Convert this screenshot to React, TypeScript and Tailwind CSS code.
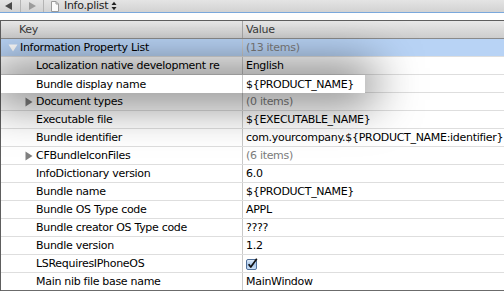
import React from "react";

type Row = {
  key: string;
  value?: string;
  level: number;
  disclosure?: "open" | "closed";
  gray?: boolean;
  check?: boolean;
  selected?: boolean;
  spot?: boolean;
};

const rows: Row[] = [
  { key: "Information Property List", value: "(13 items)", level: 0, disclosure: "open", gray: true, selected: true },
  { key: "Localization native development re", value: "English", level: 1 },
  { key: "Bundle display name", value: "${PRODUCT_NAME}", level: 1, spot: true },
  { key: "Document types", value: "(0 items)", level: 1, disclosure: "closed", gray: true },
  { key: "Executable file", value: "${EXECUTABLE_NAME}", level: 1 },
  { key: "Bundle identifier", value: "com.yourcompany.${PRODUCT_NAME:identifier}", level: 1 },
  { key: "CFBundleIconFiles", value: "(6 items)", level: 1, disclosure: "closed", gray: true },
  { key: "InfoDictionary version", value: "6.0", level: 1 },
  { key: "Bundle name", value: "${PRODUCT_NAME}", level: 1 },
  { key: "Bundle OS Type code", value: "APPL", level: 1 },
  { key: "Bundle creator OS Type code", value: "????", level: 1 },
  { key: "Bundle version", value: "1.2", level: 1 },
  { key: "LSRequiresIPhoneOS", level: 1, check: true },
  { key: "Main nib file base name", value: "MainWindow", level: 1 },
];

function Disclosure({ kind, selected }: { kind: "open" | "closed"; selected?: boolean }) {
  const fill = selected ? "#ffffff" : "#808080";
  if (kind === "open") {
    return (
      <svg width="10" height="8" viewBox="0 0 10 8" className="shrink-0">
        <path d="M0.5 0.5 L9.5 0.5 L5 7.5 Z" fill={fill} />
      </svg>
    );
  }
  return (
    <svg width="8" height="10" viewBox="0 0 8 10" className="shrink-0">
      <path d="M0.5 0.5 L7.5 5 L0.5 9.5 Z" fill={fill} />
    </svg>
  );
}

function Check() {
  return (
    <svg width="12" height="12" viewBox="0 0 12 12">
      <defs>
        <linearGradient id="cb" x1="0" y1="0" x2="0" y2="1">
          <stop offset="0" stopColor="#e6f0fb" />
          <stop offset="0.5" stopColor="#a9c8ec" />
          <stop offset="1" stopColor="#cfe2f7" />
        </linearGradient>
      </defs>
      <rect x="0.5" y="1.5" width="10" height="10" rx="1.5" fill="url(#cb)" stroke="#50709a" />
      <path d="M2.6 6.2 L4.8 9 L10.8 0.8" fill="none" stroke="#111" strokeWidth="1.7" strokeLinejoin="round" />
    </svg>
  );
}

function KeyCell({ r }: { r: Row }) {
  return (
    <div className="flex h-full w-[242px] shrink-0 items-center overflow-hidden whitespace-nowrap border-r border-[#c9c9c9]">
      {r.level === 0 ? (
        <div className="flex items-center">
          <div className="ml-[7px] mr-[2px] flex w-[10px] items-center">
            {r.disclosure && <Disclosure kind={r.disclosure} selected={r.selected} />}
          </div>
          <span>{r.key}</span>
        </div>
      ) : (
        <div className="flex items-center">
          <div className="ml-[24px] mr-[2px] flex w-[9px] items-center">
            {r.disclosure && <Disclosure kind={r.disclosure} selected={r.selected} />}
          </div>
          <span>{r.key}</span>
        </div>
      )}
    </div>
  );
}

function ValueText({ r }: { r: Row }) {
  if (r.check) {
    return (
      <div className="flex items-center pl-[3px] pt-[1px]">
        <Check />
      </div>
    );
  }
  return <span className={r.gray ? "pl-[3px] text-[#7c7c7c]" : "pl-[3px] text-black"}>{r.value}</span>;
}

function TableRow({ r, last }: { r: Row; last: boolean }) {
  const border = last ? "border-b border-[#6b6b6b]" : "border-b border-[#dedede]";
  if (r.spot) {
    return (
      <div className={`flex h-[18px] ${border}`}>
        <div className="relative z-10 flex h-[18px] w-[364px] shrink-0 bg-white shadow-[0_0_46px_10px_rgba(0,0,0,0.55)]">
          <KeyCell r={r} />
          <div className="flex h-full items-center whitespace-nowrap">
            <ValueText r={r} />
          </div>
        </div>
        <div className="flex-1 bg-white" />
      </div>
    );
  }
  return (
    <div className={`flex h-[18px] ${border} ${r.selected ? "bg-[#b8d3f5]" : "bg-white"}`}>
      <KeyCell r={r} />
      <div className="flex h-full flex-1 items-center overflow-hidden whitespace-nowrap">
        <ValueText r={r} />
      </div>
    </div>
  );
}

export default function App() {
  return (
    <div
      className="relative h-[292px] w-[504px] overflow-hidden bg-white text-[11px] leading-none tracking-[-0.3px] text-black"
      style={{ fontFamily: '"DejaVu Sans", "Liberation Sans", sans-serif' }}
    >
      {/* toolbar */}
      <div className="flex h-[12px] items-center bg-gradient-to-b from-[#e4e4e4] to-[#d2d2d2] text-[#222]">
        <div className="flex w-[20px] items-center justify-center pr-[4px]">
          <svg width="7" height="8" viewBox="0 0 7 8">
            <path d="M7 0 L0 4 L7 8 Z" fill="#4a4a4a" />
          </svg>
        </div>
        <div className="h-full w-px bg-[#b4b4b4]" />
        <div className="flex w-[22px] items-center justify-center">
          <svg width="7" height="8" viewBox="0 0 7 8">
            <path d="M0 0 L7 4 L0 8 Z" fill="#9c9c9c" />
          </svg>
        </div>
        <div className="h-full w-px bg-[#b4b4b4]" />
        <div className="ml-[7px] flex items-center">
          <svg width="8" height="11" viewBox="0 0 8 11">
            <path d="M0.5 0.5 H5 L7.5 3 V10.5 H0.5 Z" fill="#fbfbfb" stroke="#9a9a9a" />
            <path d="M5 0.5 V3 H7.5" fill="none" stroke="#9a9a9a" />
          </svg>
        </div>
        <span className="ml-[5px] text-[11px] leading-[12px]">Info.plist</span>
        <svg width="6" height="10" viewBox="0 0 6 10" className="ml-[3px]">
          <path d="M0.5 4 L3 0.8 L5.5 4 Z" fill="#222" />
          <path d="M0.5 6 L3 9.2 L5.5 6 Z" fill="#222" />
        </svg>
      </div>
      <div className="h-px bg-[#7aa8dc]" />
      <div className="h-[7px] bg-white" />

      {/* table */}
      <div className="border-l border-t border-[#5e5e5e]">
        <div className="flex h-[18px] border-b border-[#8a8a8a] bg-gradient-to-b from-[#e8e8e8] to-[#cdcdcd] text-[#3a3a3a]">
          <div className="flex h-full w-[242px] shrink-0 items-center border-r border-[#a8a8a8] pl-[18px]">Key</div>
          <div className="flex h-full items-center pl-[3px]">Value</div>
        </div>
        {rows.map((r, i) => (
          <TableRow key={r.key} r={r} last={i === rows.length - 1} />
        ))}
      </div>
    </div>
  );
}
